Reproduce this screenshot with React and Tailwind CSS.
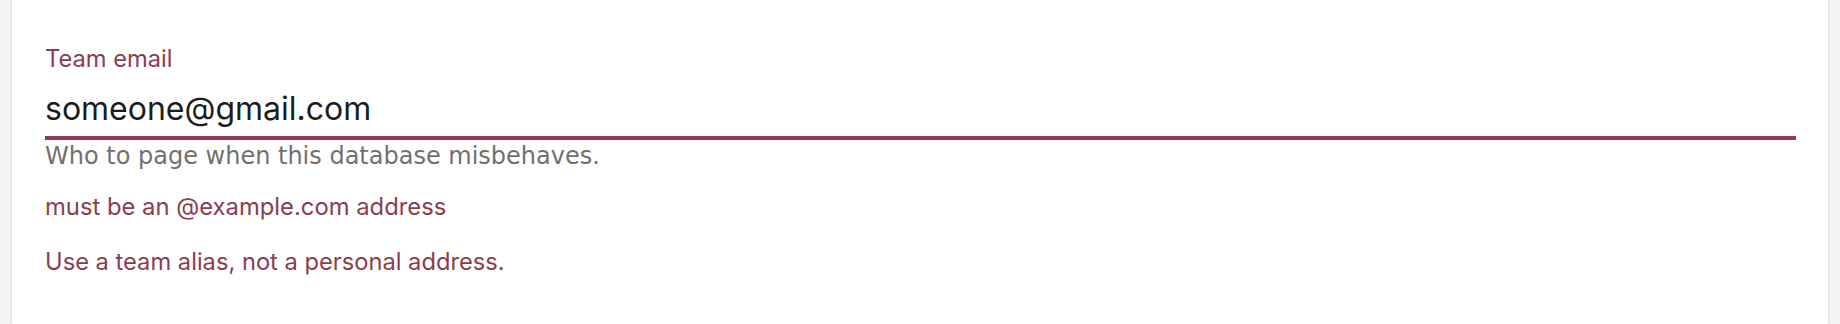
import React from 'react';

const App = () => {
  return (
    <div className="h-[324px] bg-[#f4f4f4] px-[12px]">
      <div className="h-full bg-white shadow-[0_0_3px_rgba(0,0,0,0.18)] pl-[33px] pr-[32px] pt-[43px] font-['Inter',sans-serif]">
        {/* Field */}
        <label className="block text-[23.7px] leading-[32px] text-[#8b3d4e]">Team email</label>
        <div className="mt-[13px] border-b-[4px] border-[#8b3f4f]">
          <input
            type="email"
            defaultValue="someone@gmail.com"
            className="block w-full h-[48px] pb-[8px] bg-transparent outline-none text-[32px] leading-[40px] text-[#1c1c1c] font-['Inter',sans-serif]"
          />
        </div>
        <p className="text-[24px] leading-[32px] text-[#707070] font-['DejaVu_Sans',sans-serif]">
          Who to page when this database misbehaves.
        </p>
        <p className="mt-[19px] text-[23.8px] leading-[32px] text-[#8b3d4e]">must be an @example.com address</p>
        <p className="mt-[23px] text-[23.7px] leading-[32px] text-[#8b3d4e]">Use a team alias, not a personal address.</p>
      </div>
    </div>
  );
};

export default App;
